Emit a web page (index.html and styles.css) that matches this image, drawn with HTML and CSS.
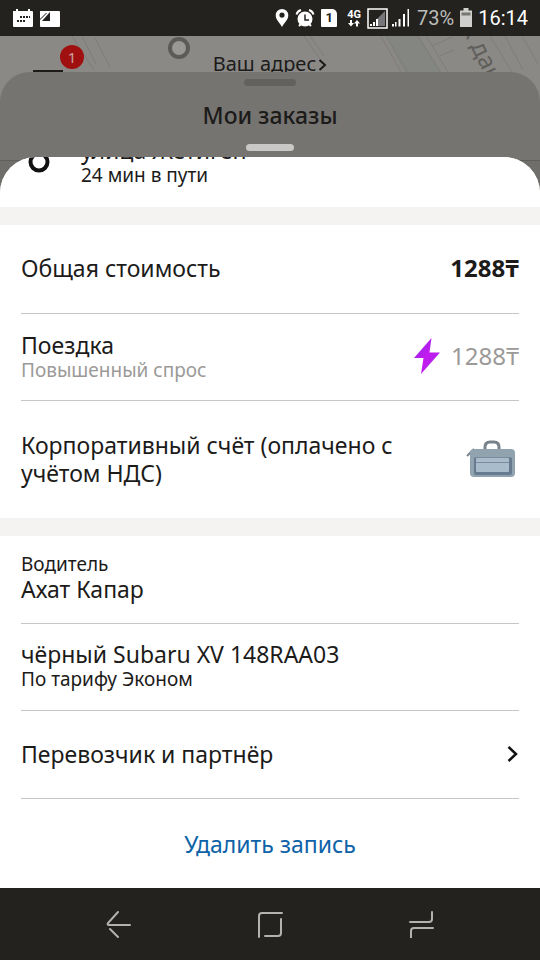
FILE: index.html
```html
<!DOCTYPE html>
<html lang="ru">
<head>
<meta charset="utf-8">
<meta name="viewport" content="width=device-width, initial-scale=1">
<title>Мои заказы</title>
<link rel="stylesheet" href="styles.css">
</head>
<body>
<header class="status">
  <div class="status-group">
    <svg width="22" height="20" viewBox="0 0 22 20" aria-hidden="true"><path fill="#fff" d="M1 3h3V1h2v2h10V1h2v2h2q1 0 1 1v14q0 1-1 1H2q-1 0-1-1z"/><path fill="#23221f" d="M11 8h2v2h-2zM14 8h2v2h-2zM17 8h1v2h-1zM8 8h2v2H8zM5 12h2v2H5zM8 12h2v2H8zM11 12h2v2h-2z"/></svg>
    <svg width="22" height="20" viewBox="0 0 22 20" aria-hidden="true"><rect x="1" y="3" width="20" height="16" rx="1" fill="#fff"/><path fill="#23221f" d="M11 4v9H3zM1 5h7L1 12z"/><path fill="#fff" d="M1 3h8L1 11z"/></svg>
  </div>
  <div class="status-group status-right">
    <svg width="14" height="20" viewBox="0 0 14 20" aria-hidden="true"><path fill="#fff" fill-rule="evenodd" d="M7 1a6.300 6.300 0 0 1 6.300 6.300C13.300 12 9 15 7 19 5 15 .7 12 .7 7.300A6.300 6.300 0 0 1 7 1zM7 4.500a2.600 2.600 0 1 0 0 5.200 2.600 2.600 0 0 0 0-5.200z"/></svg>
    <svg width="20" height="20" viewBox="0 0 20 20" aria-hidden="true"><circle cx="10" cy="11" r="7.500" fill="#fff"/><path d="M1.500 6.500q1-3.500 4.500-4.500M18.500 6.500q-1-3.500-4.500-4.500" fill="none" stroke="#fff" stroke-width="2"/><path d="M4 18l2-2M16 18l-2-2" stroke="#fff" stroke-width="2"/><path d="M10 6.500V12h4" fill="none" stroke="#23221f" stroke-width="1.500"/></svg>
    <span class="sim">1</span>
    <span class="net"><span>4G</span><svg width="12" height="7" viewBox="0 0 12 7" aria-hidden="true"><path fill="#fff" d="M2 0h2v3h2L3 6.500 0 3h2zM8 6.500h2v-3h2L9 0 6 3.500h2z"/></svg></span>
    <span class="signals">
      <svg width="21" height="21" viewBox="0 0 21 21" aria-hidden="true"><rect x="1" y="1" width="19" height="19" fill="none" stroke="#fff" stroke-width="1.500"/><path fill="#77777a" d="M18 3v15H9v-6z"/><path fill="#fff" d="M3 16h2v2H3zM6 14h2v4H6zM9 11h2v7H9z"/></svg>
      <svg width="20" height="20" viewBox="0 0 20 20" aria-hidden="true"><path fill="#fff" d="M1 16h2v2.500H1zM4 14h1.500v4.500H4zM7.500 11h2v7.500h-2zM12 6h2v12.500h-2zM16.500 1h1.500v17.500h-1.500z"/></svg>
    </span>
    <span class="battery-text">73%</span>
    <svg width="12" height="20" viewBox="0 0 12 20" aria-hidden="true"><path fill="#cfcfcd" d="M3.500 0h5v2.500H12V19H0V2.500h3.500z"/><path fill="#777673" d="M1.500 4.500h9v3h-9z"/></svg>
    <time class="clock">16:14</time>
  </div>
</header>

<section class="map">
  <svg class="map-art" viewBox="0 0 540 66" preserveAspectRatio="xMidYMin slice" aria-hidden="true">
    <path fill="#838681" d="M386 0h32l26 40h-38z"/>
    <path d="M72 0l22 34M82 0l14 28M95 2l15 29M304 0l18 26M310 0l14 20M381 0l21 38M386 0l24 40M418 0l25 40M426 0l22 36M490 0l22 36M505 0l18 34M522 0l16 28" fill="none" stroke="#7e7d79"/>
    <path d="M432 10l20-9M440 20l14-6" stroke="#7e7d79"/>
    <circle cx="179" cy="12" r="9" fill="#999895" stroke="#5c5b58" stroke-width="4"/>
    <text class="street" transform="translate(462 -7) rotate(64)">к дан</text>
  </svg>
  <button class="menu" type="button" aria-label="Меню"><span class="menu-line"></span><span class="badge">1</span></button>
  <a class="address" href="#address">Ваш адрес<svg width="9" height="14" viewBox="0 0 9 14" aria-hidden="true"><path d="M1.500 2L7 7l-5.500 5" fill="none" stroke="#1c1b1a" stroke-width="2"/></svg></a>
</section>

<section class="orders">
  <span class="handle handle-dark"></span>
  <h1>Мои заказы</h1>
  <span class="handle handle-light"></span>
</section>

<main class="sheet">
  <section class="route">
    <svg width="22" height="22" viewBox="0 0 22 22" aria-hidden="true"><circle cx="11" cy="11" r="8.500" fill="#fff" stroke="#111" stroke-width="4"/></svg>
    <div><p class="title">улица Жетиген</p><p class="note">24 мин в пути</p></div>
  </section>

  <section class="block">
    <div class="row"><p class="title">Общая стоимость</p><strong class="price">1288₸</strong></div>
    <div class="row row-trip">
      <div><p class="title">Поездка</p><p class="note muted">Повышенный спрос</p></div>
      <div class="fare muted"><svg width="26" height="36" viewBox="0 0 26 36" aria-hidden="true"><defs><linearGradient id="surge" x1="0" y1="0" x2="1" y2="1"><stop offset="0" stop-color="#8a2be8"/><stop offset=".5" stop-color="#c31aef"/><stop offset="1" stop-color="#a32bea"/></linearGradient></defs><path fill="url(#surge)" d="M17.500 0L0 20h9.500L7 36 26 14.500H15.500z"/></svg><span class="price">1288₸</span></div>
    </div>
    <div class="row row-tall">
      <p class="title payment">Корпоративный счёт (оплачено с учётом НДС)</p>
      <svg class="case" width="50" height="38" viewBox="0 0 50 38" aria-hidden="true"><path d="M19 10V7q0-5 5-5h4q5 0 5 5v3" fill="none" stroke="#77828a" stroke-width="3"/><path d="M1 16l7-7" stroke="#77828a" stroke-width="2"/><rect x="4" y="9" width="45" height="28" rx="4" fill="#92a3b0"/><rect x="8" y="17" width="38" height="18" rx="2" fill="#667b90"/><rect x="10" y="18" width="33" height="14" rx="1" fill="#a9bccb"/><path d="M9 17.500h36M10 22.500h33" stroke="#788c9e"/></svg>
    </div>
  </section>

  <section class="block block-last">
    <div class="row row-pair"><div><p class="note">Водитель</p><p class="title">Ахат Капар</p></div></div>
    <div class="row row-pair"><div><p class="title">чёрный Subaru XV 148RAA03</p><p class="note">По тарифу Эконом</p></div></div>
    <a class="row" href="#carrier"><span class="title">Перевозчик и партнёр</span><svg width="13" height="18" viewBox="0 0 13 18" aria-hidden="true"><path d="M2.500 2L10 9l-7.500 7" fill="none" stroke="#111" stroke-width="2.500"/></svg></a>
    <button class="row delete" type="button">Удалить запись</button>
  </section>
</main>

<nav class="system">
  <button type="button" aria-label="Назад"><svg width="28" height="28" viewBox="0 0 28 28"><path d="M14 2L4 13Q3 15 5 15H26M6 19L14 27"/></svg></button>
  <button type="button" aria-label="Домой"><svg width="28" height="28" viewBox="0 0 28 28"><path d="M3 27V6q0-3 3-3h20M25 9v14q0 3-3 3H9"/></svg></button>
  <button type="button" aria-label="Недавние"><svg width="28" height="28" viewBox="0 0 28 28"><path d="M24 2v7q0 3-3 3H2M3 28v-7q0-3 3-3h19"/></svg></button>
</nav>
</body>
</html>
```
FILE: styles.css
```css
* { box-sizing: border-box; }

body {
  margin: 0;
  min-height: 100vh;
  display: flex;
  flex-direction: column;
  background: #6f6e6b;
  color: #1c1b1a;
  font-family: "Noto Sans", sans-serif;
}

h1, p { margin: 0; }
a { color: inherit; text-decoration: none; }
button { border: 0; padding: 0; background: none; font: inherit; color: inherit; }
svg { flex: none; display: block; }

.status {
  height: 36px;
  padding: 0 12px;
  display: flex;
  align-items: center;
  justify-content: space-between;
  background: #23221f;
  color: #fff;
  font-family: Roboto, sans-serif;
}
.status-group { display: flex; align-items: center; gap: 5px; }
.status-right { gap: 6px; }
.sim {
  width: 16px;
  height: 18px;
  border-radius: 1px 5px 1px 1px;
  background: #fff;
  color: #23221f;
  font-size: 13px;
  font-weight: 700;
  line-height: 18px;
  text-align: center;
}
.net {
  display: flex;
  flex-direction: column;
  align-items: center;
  margin-left: 4px;
  font-size: 11px;
  font-weight: 700;
  line-height: 10px;
}
.signals { display: flex; align-items: center; gap: 3px; }
.battery-text { color: #bdbcba; font-size: 20px; }
.clock { font-size: 20px; }

.map {
  position: relative;
  height: 66px;
  display: flex;
  justify-content: center;
  align-items: flex-start;
  background: #8a8986;
}
.map-art { position: absolute; inset: 0; width: 100%; height: 66px; }
.street { font-size: 24px; fill: #5f5e5b; }
.menu { position: absolute; left: 33px; top: 9px; width: 51px; height: 27px; }
.menu-line { position: absolute; left: 0; bottom: 0; width: 30px; height: 2px; background: #1c1b1a; }
.badge {
  position: absolute;
  right: 0;
  top: 0;
  width: 24px;
  height: 24px;
  border-radius: 50%;
  background: #a11010;
  color: #c9a5a3;
  font-size: 15px;
  line-height: 24px;
}
.address {
  position: relative;
  padding-top: 14px;
  display: flex;
  gap: 2px;
  font-size: 20px;
  line-height: 28px;
}
.address svg { margin-top: 8px; }

.orders {
  position: relative;
  height: 89px;
  margin-top: -30px;
  padding-top: 7px;
  display: flex;
  flex-direction: column;
  align-items: center;
  border-bottom: 1px solid #5f5e5b;
  border-radius: 30px 30px 0 0;
  background: #757471;
}
.handle { flex: none; height: 7px; border-radius: 4px; }
.handle-dark { width: 52px; background: #62615e; }
.handle-light { width: 48px; background: #c9c8c6; }
h1 { margin: 13px 0; font-size: 23px; font-weight: 500; line-height: 32px; }

.sheet {
  position: relative;
  margin-top: -4px;
  flex: 1;
  display: flex;
  flex-direction: column;
  overflow: hidden;
  border-radius: 36px 36px 0 0;
  background: #f4f3f1;
}
.route {
  height: 50px;
  padding: 0 21px 21px 28px;
  display: flex;
  align-items: flex-end;
  gap: 31px;
  background: #fff;
}
.route svg { align-self: flex-start; margin-top: -6px; }
.block { background: #fff; margin-top: 18px; padding: 0 21px; }
.block-last { flex: 1; display: flex; flex-direction: column; }
.row {
  width: 100%;
  min-height: 88px;
  padding-bottom: 2px;
  display: flex;
  align-items: center;
  justify-content: space-between;
}
.row + .row { border-top: 1px solid #c8c7c5; }
.row-pair { min-height: 87px; padding-bottom: 4px; }
.row-trip { min-height: 87px; }
.row-tall { min-height: 118px; }
.title { font-size: 23px; line-height: 28px; }
.note { font-size: 19px; line-height: 22px; }
.muted { color: #9b9a98; }
.payment { max-width: 400px; }
.case { margin-right: 3px; }
.price { font-size: 24px; line-height: 28px; }
.fare { display: flex; align-items: center; gap: 11px; }
.delete { flex: 1; padding-bottom: 0; justify-content: center; color: #0d62a8; font-size: 23px; line-height: 28px; }

.system {
  height: 72px;
  padding: 0 42px;
  display: flex;
  align-items: center;
  justify-content: space-between;
  background: #23221f;
}
.system button { flex: 1; display: flex; justify-content: center; }
.system path { fill: none; stroke: #b3b2af; stroke-width: 2; stroke-linecap: round; }
```
